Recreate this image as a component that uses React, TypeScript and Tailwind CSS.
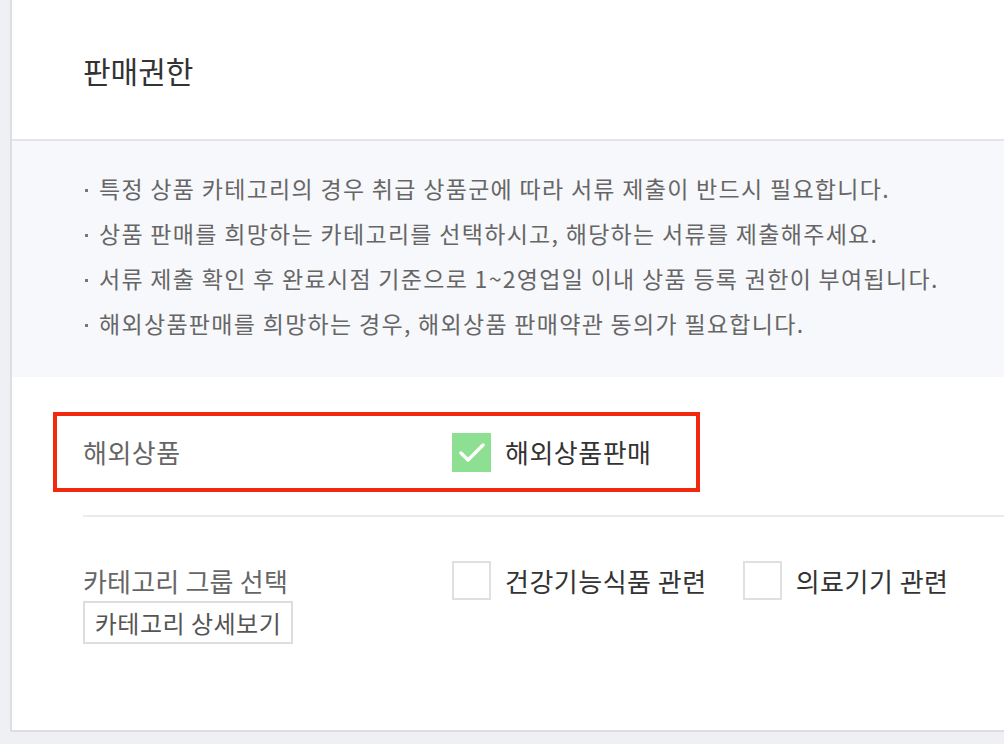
const notices = [
  '특정 상품 카테고리의 경우 취급 상품군에 따라 서류 제출이 반드시 필요합니다.',
  '상품 판매를 희망하는 카테고리를 선택하시고, 해당하는 서류를 제출해주세요.',
  '서류 제출 확인 후 완료시점 기준으로 1~2영업일 이내 상품 등록 권한이 부여됩니다.',
  '해외상품판매를 희망하는 경우, 해외상품 판매약관 동의가 필요합니다.',
];

function Checkbox({ checked, label }: { checked?: boolean; label: string }) {
  return (
    <label className="flex items-center gap-[14px]">
      {checked ? (
        <span className="flex h-[39px] w-[39px] items-center justify-center bg-[#8ddf92]">
          <svg width="26" height="19" viewBox="0 0 26 19" fill="none" stroke="white" strokeWidth="3.4" strokeLinecap="round" strokeLinejoin="round">
            <path d="M2 10l7 7L24 2" />
          </svg>
        </span>
      ) : (
        <span className="block h-[39px] w-[39px] border-2 border-[#e0e0e0] bg-white" />
      )}
      <span className="text-[26px] leading-none tracking-[0.5px] text-[#333]">{label}</span>
    </label>
  );
}

export default function App() {
  return (
    <div className="h-[744px] overflow-hidden bg-[#eef0f3] pl-[10px] font-['Noto_Sans_CJK_KR',sans-serif]">
      <div className="h-[732px] border-b-2 border-l-2 border-[#dcdee2] bg-white">
        {/* Header */}
        <div className="flex h-[141px] items-center border-b-2 border-[#e4e5e8] pl-[71px]">
          <h2 className="text-[30px] font-normal leading-none text-[#333]">판매권한</h2>
        </div>

        {/* Notice */}
        <ul className="bg-[#f7f8fb] pb-[31px] pt-[25px] pl-[73px]">
          {notices.map((n) => (
            <li key={n} className="flex h-[45px] items-center text-[23px] tracking-[1.3px] text-[#666]">
              <span className="mr-[11px] mt-[4px] block h-[3px] w-[3px] bg-[#777]" />
              {n}
            </li>
          ))}
        </ul>

        {/* Overseas row (highlighted) */}
        <div className="ml-[41px] mt-[35px] flex h-[80px] w-[647px] items-center border-4 border-[#f2290f] pl-[26px]">
          <div className="w-[369px] text-[26px] leading-none tracking-[0.5px] text-[#666]">해외상품</div>
          <Checkbox checked label="해외상품판매" />
        </div>

        <div className="ml-[71px] mt-[23px] h-[2px] bg-[#ebebeb]" />

        {/* Category group */}
        <div className="ml-[71px] mt-[44px] flex">
          <div className="w-[369px]">
            <div className="text-[26px] leading-[40px] tracking-[0.2px] text-[#666]">카테고리 그룹 선택</div>
            <button className="h-[43px] w-[210px] border-2 border-[#dddddd] bg-white text-[24px] tracking-[0.5px] text-[#555]">
              카테고리 상세보기
            </button>
          </div>
          <div className="flex h-[39px] gap-[36px]">
            <Checkbox label="건강기능식품 관련" />
            <Checkbox label="의료기기 관련" />
          </div>
        </div>
      </div>
    </div>
  );
}
